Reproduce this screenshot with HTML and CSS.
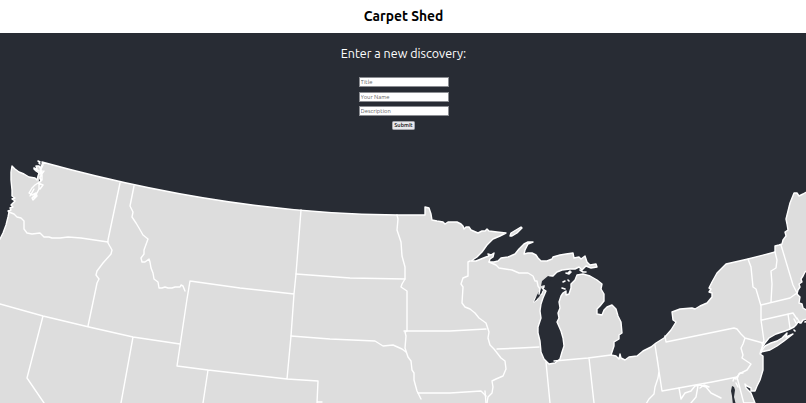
FILE: index.html
```
<!DOCTYPE html>
<html lang="en">
<head>
    <meta charset="UTF-8">
    <meta name="viewport" content="width=device-width, initial-scale=1.0">
    <title>Carpet Shed</title>
    <link rel="stylesheet" href="styles.css">
</head>
<body>
    <header class="header">
        <h1>Carpet Shed</h1>
    </header>
    <main class="main">
        <svg class="map" viewBox="0 33 806 370" preserveAspectRatio="none" aria-hidden="true">
            <!-- mainland -->
            <path class="land" d="M-5 246L0 239 3 233 6 225 8 217 9 212 8 211 11 210 10 208 13 207 11 205 13 203 15 201 12 199 15 198 12 196 12 190 11 180 11 172 12 166 15 169 19 172 24 174 29 177 35 178 37 180 38 176 39 173 36 171 34 169 37 169 36 166 39 166 41 169 43 165 42 162Q230 214 397 215L425 215 425 207 429 208 431 214 432 220 437 221 443 222 445 224 448 222 457 222 461 224 463 226 464 229 466 227 469 227 471 230 478 233 482 231 485 231 487 229 489 231 497 232 506 233 500 236 493 239 487 245 482 252 477 257 471 261 476 261 481 259 486 257 489 256 488 254 491 255 494 253 493 257 490 259 489 262 494 262 498 261 501 258 508 257 515 254 519 249 524 244 528 242 533 242 528 244 525 250 524 254 528 253 532 253 536 255 538 258 541 261 547 261 552 259 553 257 560 255 566 254 573 253 574 258 579 257 581 259 585 256 587 262 590 265 596 264 597 267 591 268 586 266 582 270 579 267 575 269 570 269 562 270 557 272 553 276 550 276 548 280 544 283 544 287 541 291 538 295 535 299 534 302 537 300 539 295 542 294 543 289 546 291 543 298 541 304 540 311 541 318 538 327 538 333 540 341 541 352 544 359 549 364 555 363 560 359 562 352 564 346 563 338 561 331 557 322 559 318 558 313 560 308 559 302 561 296 563 293 566 291 566 295 569 294 571 288 571 284 575 280 577 275 583 274 590 276 597 280 602 284 601 289 604 294 604 301 600 306 597 309 597 314 602 315 604 310 607 307 612 305 616 309 618 316 621 322 622 333 619 335 619 339 614 342 614 346 611 355 616 356 619 359 620 354 621 358 625 360 629 357 637 356 643 351 651 347 656 343 664 338 671 330 676 322 673 320 672 312 680 309 692 308 695 309 700 306 707 303 712 297 712 293 709 292 711 289 709 288 712 282 717 273 726 264 748 259 775 252 775 246 779 245 782 244 783 240 786 236 785 232 788 230 787 224 786 219 788 211 790 203 794 193 797 193 799 196 803 194 810 190V269L805 272 803 276 801 279 802 282 799 284 800 287 798 290 797 294 800 297 799 303 802 304 803 308 810 312V318L803 320 801 323 798 322 796 325 794 327 790 329 785 331 776 334 769 338 765 343 761 350 760 354 763 356 763 370 760 380 757 386 755 391 751 391 751 388 747 386 745 384 746 388 751 393 753 398 755 403V410H-5Z"/>
            <!-- islands -->
            <path class="land" d="M510 236L511 233 521 227 522 228 517 233 512 236ZM762 350L765 346 771 343 777 341 782 338 787 333 786 337 793 334 784 341 777 346 770 350 761 352Z"/>
            <path class="islet" d="M38 161l2 1M39 163l1 1M34 168l3 2 2 1M40 174l2-3M566 273l3 1 2-2M570 271l-2 2M563 282l2-1M568 280l1 1M562 288l3 1M580 270l3 2 3 0M794 330l1 1M805 322l3-1"/>
            <!-- Puget Sound, Green Bay and Chesapeake inlets -->
            <path class="water" d="M534 302l3-7 4-7 2 2-4 7zM541 286l1-5 6-5 4 1-3 5-4 3zM732 386l-1 5 1 5 1 9 3 0-2-8 1-7-1-3zM39 179l1 5 0-4z"/>
            <path class="sound" d="M42 164l-1 6 1 4-2 3 1 4-3 2-3 2-3 3-3 5 3 2 4-2 1 3-4 4-1-2 5-5 2-4 0-6 3-3 0-5-2-3 1-6M30 196l4-7M34 198l4-7M44 171l-3 4M38 183l5 2-3 4"/>
            <!-- western states -->
            <g class="border">
                <path d="M9 212l5 2 3 3 4 1 3 3 0 8 3 4 5 1 8-1 4 4 5 0 3 1 8 0 8-1 13 1 27 4M120 183l-12 57 0 3 4 7-1 4-8 9-6 8-1 4 3 4-2 4-1 5-8 38"/>
                <path d="M134 186l-4 20 3 6-1 5 4 6 3 5 4 7 5 4-4 11 0 4-3 4 1 4 3 0 4-3 1 3 1 6 2 5 1 6 4 3 1 6 3 0 3-1 3 1 4 0 3-1 5 0 1-2 2 1 2 5"/>
                <path d="M0 304L43 316 89 327 133 337 180 344M43 316L27 378 44 403M133 337L121 403"/>
                <path d="M301 210L296 274 294 294 291 336 287 379M190 281L187 299 177 366 208 370 287 379 318 381 317 403M190 281L240 288 294 294M208 370L203 403M317 402L322 402"/>
                <path d="M296 274L350 278 405 279M291 336L330 339 375 341 383 346 393 345 402 349 406 352"/>
            </g>
            <!-- plains and midwest -->
            <g class="border">
                <path d="M397 215l1 4-1 11 4 12 1 14 3 11 0 12-3 5-1 3 6 4 0 40-2 1 1 4-1 12 1 3 2 6 3 4 1 9 2 3 0 7 3 11 4 8"/>
                <path d="M404 331L450 331 486 329M418 393L450 393 481 391 486 396"/>
                <path d="M470 261l-2 1 0 14-5 2-2 6 2 3-1 16 3 4 5 2 5 4 4 5 7 5 3 9-1 6 2 7 4 4 7 9 4 3 1 8-3 7-7 3-4 2 1 6-1 6-4 4-1 6 0 8"/>
                <path d="M497 349L520 348 539 347M489 262l7 3 3 3 13 2 7 3 9 0 5 3 2 5 2 0 1 5 2 3-1 5"/>
                <path d="M546 362L550 403M554 361L588 358 611 355M589 358L594 403M485 391l1 12"/>
            </g>
            <!-- northeast -->
            <g class="border">
                <path d="M655 345L662 391 712 382 737 377M657 357l2 14-1 7-3 9-1 7-5 5-3 5M665 336l1 6 68-14 3 1 4 5 4 4 18 5M745 338l-2 6-2 4 2 7-1 3 9 6-4 6-8 4-2 5"/>
                <path d="M737 377l7 27M744 403l10 0M737 377l3-4 3 0M679 388l2 11 4-6 6-2 4-5 5-1 6 2 5 6 10 5M698 386l-2 11-5 6M700 388l4-3 5 2"/>
                <path d="M748 259l3 8 2 20 3 2 5 17 0 14 3 21-2 3M761 305L790 298 797 293M775 252l2 8-1 8-5 3 1 13-1 18M781 245l12 40 4 8M762 320L793 313 797 319M788 314l2 14"/>
                <path d="M763 343l-2 10M736 383l2 4M733 381l1-3 2 1M794 319l2 4M797 318l3 5"/>
            </g>
        </svg>
        <section class="discovery">
            <h2>Enter a new discovery:</h2>
            <form class="discovery-form">
                <input type="text" name="title" placeholder="Title">
                <input type="text" name="name" placeholder="Your Name">
                <input type="text" name="description" placeholder="Description">
                <button type="submit">Submit</button>
            </form>
        </section>
    </main>
</body>
</html>
```
FILE: styles.css
```
* {
    box-sizing: border-box;
}

body {
    margin: 0;
    height: 100vh;
    display: flex;
    flex-direction: column;
    overflow: hidden;
    background-color: #282c34;
    font-family: Ubuntu, 'Noto Sans', sans-serif;
}

.header {
    height: 33px;
    flex-shrink: 0;
    display: flex;
    justify-content: center;
    align-items: center;
    padding-bottom: 1px;
    padding-left: 1px;
    background-color: #fff;
}

h1 {
    margin: 0;
    font-size: 13.8px;
    line-height: 18px;
    color: #000;
}

.main {
    display: grid;
    height: 370px;
}

.map,
.discovery {
    grid-area: 1 / 1;
}

.map {
    width: 100%;
    height: 370px;
}

.land {
    fill: #ddd;
    stroke: #fff;
    stroke-width: 1.4;
    stroke-linejoin: round;
}

.border,
.islet,
.sound {
    fill: none;
    stroke: #fff;
    stroke-width: 1.4;
    stroke-linejoin: round;
    stroke-linecap: round;
}

.islet {
    stroke-width: 1.6;
}

.water {
    fill: #282c34;
}

.discovery {
    display: flex;
    flex-direction: column;
    align-items: center;
    padding-top: 11px;
    padding-left: 1px;
}

h2 {
    margin: 0 0 15px;
    font-size: 12.5px;
    font-weight: normal;
    line-height: 18px;
    color: #fff;
}

.discovery-form {
    display: flex;
    flex-direction: column;
    align-items: center;
    gap: 4.5px;
}

input {
    width: 90px;
    height: 10px;
    padding: 0 1px;
    border: 1px solid #8b8d92;
    background-color: #fff;
    font-family: inherit;
    font-size: 5.9px;
}

input::placeholder {
    color: #686868;
}

button {
    width: 23px;
    height: 9px;
    padding: 0;
    border: 1px solid #a5a5ac;
    border-radius: 1.5px;
    background-color: #e9e9ed;
    color: #000;
    font-family: inherit;
    font-size: 5.7px;
    font-weight: 500;
    line-height: 7px;
}
```
